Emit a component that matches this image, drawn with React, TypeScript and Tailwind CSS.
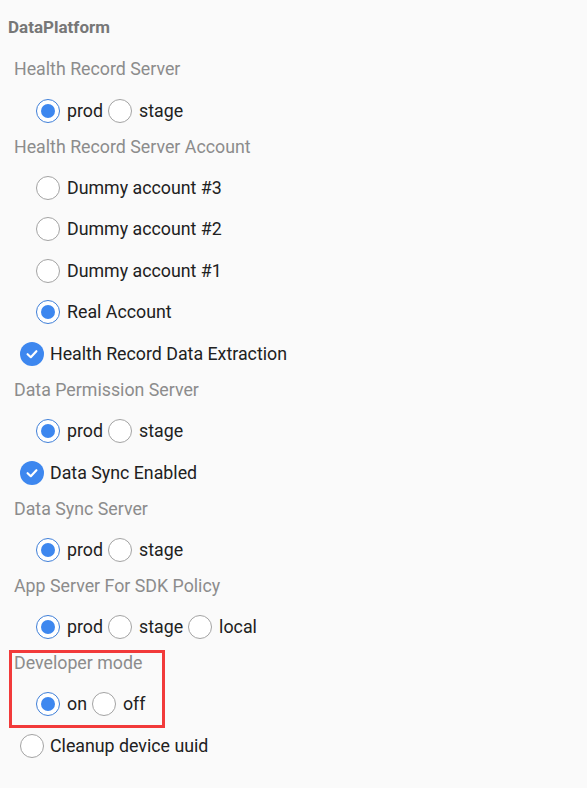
import React from "react";

const font = { fontFamily: "Roboto, 'Noto Sans', sans-serif" };

function Radio({ checked }: { checked?: boolean }) {
  return checked ? (
    <span className="flex h-[24px] w-[24px] shrink-0 items-center justify-center rounded-full border-[1.5px] border-[#3f7fd8] bg-white">
      <span className="h-[14px] w-[14px] rounded-full bg-[#3d87ef]" />
    </span>
  ) : (
    <span className="h-[24px] w-[24px] shrink-0 rounded-full border-[1.5px] border-[#a3a3a3] bg-white" />
  );
}

function Check() {
  return (
    <span className="flex h-[24px] w-[24px] shrink-0 items-center justify-center rounded-full bg-[#3d87ef]">
      <svg width="16" height="16" viewBox="0 0 16 16" fill="none">
        <path d="M3.6 8.2 L6.8 11.2 L12.4 5.2" stroke="white" strokeWidth="2.2" strokeLinecap="round" strokeLinejoin="round" />
      </svg>
    </span>
  );
}

function Label({ children }: { children: React.ReactNode }) {
  return (
    <div className="ml-[14px] pt-[3.25px] pb-[8.5px] text-[17.8px] leading-[24px] text-[#8c8c8c]">{children}</div>
  );
}

function RadioRow({ options, selected }: { options: string[]; selected: number }) {
  return (
    <div className="flex h-[41.5px] items-center pl-[36px] text-[17.8px] text-[#212121]">
      {options.map((o, i) => (
        <div key={o} className="mr-[5px] flex items-center gap-[7px]">
          <Radio checked={i === selected} />
          <span className="leading-[24px]">{o}</span>
        </div>
      ))}
    </div>
  );
}

function RadioSingle({ label, checked }: { label: string; checked?: boolean }) {
  return (
    <div className="flex h-[41.5px] items-center gap-[7px] pl-[36px] text-[17.8px] text-[#212121]">
      <Radio checked={checked} />
      <span className="leading-[24px]">{label}</span>
    </div>
  );
}

function CheckRow({ label, checked }: { label: string; checked?: boolean }) {
  return (
    <div className="flex h-[41.5px] items-center gap-[6px] pl-[20px] text-[17.8px] text-[#212121]">
      {checked ? <Check /> : <Radio />}
      <span className="leading-[24px]">{label}</span>
    </div>
  );
}

export default function App() {
  return (
    <div className="min-h-[788px] w-[587px] bg-[#fafafa]" style={font}>
      <div className="ml-[8px] pt-[15px] text-[17px] font-bold leading-[24px] text-[#777777]">DataPlatform</div>
      <div className="h-[15px]" />
      <Label>Health Record Server</Label>
      <RadioRow options={["prod", "stage"]} selected={0} />
      <Label>Health Record Server Account</Label>
      <RadioSingle label="Dummy account #3" />
      <RadioSingle label="Dummy account #2" />
      <RadioSingle label="Dummy account #1" />
      <RadioSingle label="Real Account" checked />
      <CheckRow label="Health Record Data Extraction" checked />
      <Label>Data Permission Server</Label>
      <RadioRow options={["prod", "stage"]} selected={0} />
      <CheckRow label="Data Sync Enabled" checked />
      <Label>Data Sync Server</Label>
      <RadioRow options={["prod", "stage"]} selected={0} />
      <Label>App Server For SDK Policy</Label>
      <RadioRow options={["prod", "stage", "local"]} selected={0} />
      <div className="relative">
        <Label>Developer mode</Label>
        <RadioRow options={["on", "off"]} selected={0} />
        <div className="pointer-events-none absolute left-[9px] top-[2px] h-[78px] w-[156px] border-[3px] border-[#f23a3a]" />
      </div>
      <CheckRow label="Cleanup device uuid" />
    </div>
  );
}
